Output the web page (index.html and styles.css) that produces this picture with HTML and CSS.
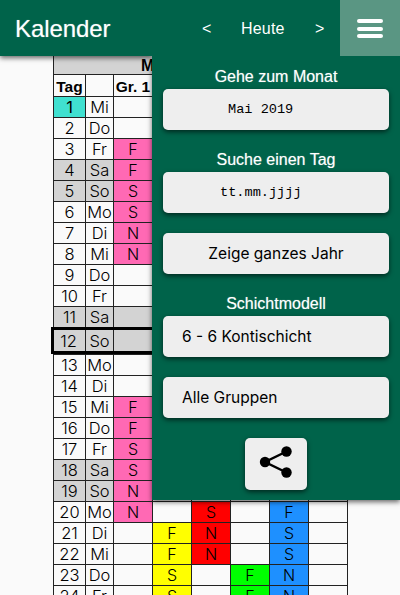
FILE: index.html
```html
<!DOCTYPE html>
<html lang="de">
<head>
<meta charset="utf-8">
<title>Kalender</title>
<link rel="stylesheet" href="styles.css">
</head>
<body>
<header class="bar">
  <h1 class="title">Kalender</h1>
  <nav class="nav"><span class="prev">&lt;</span><span class="today">Heute</span><span class="next">&gt;</span></nav>
  <button class="burger" aria-label="Menü"><i></i><i></i><i></i></button>
</header>
<main class="calendar" id="calendar">
  <div class="month">Mai 2019</div>
  <div class="row head"><b>Tag</b><b></b><b>Gr. 1</b><b></b><b></b><b></b><b></b><b></b></div>
</main>
<aside class="menu">
  <div class="label">Gehe zum Monat</div>
  <button class="field mono month-input">Mai 2019</button>
  <div class="label">Suche einen Tag</div>
  <button class="field mono day-input">tt.mm.jjjj</button>
  <button class="field year">Zeige ganzes Jahr</button>
  <div class="label model">Schichtmodell</div>
  <button class="field select">6 - 6 Kontischicht</button>
  <button class="field select groups">Alle Gruppen</button>
  <button class="share" aria-label="Teilen">
    <svg width="34" height="34" viewBox="0 0 34 34"><path d="M27.500 6.500 6 17l21.500 10.500" fill="none" stroke="#000" stroke-width="2.500"/><circle cx="6" cy="17" r="5.200"/><circle cx="27.500" cy="6.500" r="5.200"/><circle cx="27.500" cy="27.500" r="5.200"/></svg>
  </button>
</aside>
<script src="calendar.js"></script>
</body>
</html>
```
FILE: styles.css
```css
* { box-sizing: border-box; }
body { margin: 0; height: 595px; overflow: hidden; position: relative; background: #fafafa; font-family: "Liberation Sans", sans-serif; color: #000; }
button { border: 0; padding: 0; margin: 0; font: inherit; color: inherit; }
.bar { position: relative; z-index: 3; height: 56px; display: flex; background: #00634a; color: #fff; }
.bar::after { content: ""; position: absolute; left: 0; top: 0; width: 152px; height: 56px; box-shadow: 0 2px 5px rgba(0,0,0,.6); clip-path: inset(56px 0 -10px 0); }
.title { margin: 0; padding-left: 15px; width: 202px; font-size: 24px; font-weight: 400; line-height: 58px; letter-spacing: -.1px; text-shadow: 0 0 1px rgba(255,255,255,.5); }
.nav { width: 138px; display: flex; line-height: 58px; font-size: 16px; }
.prev { width: 39px; }
.today { width: 74px; letter-spacing: .2px; }
.burger { width: 60px; height: 56px; background: #5a9683; display: flex; flex-direction: column; align-items: center; gap: 3.500px; padding-top: 19px; }
.burger i { width: 26px; height: 4px; border-radius: 2px; background: #fff; flex: none; }
.calendar { width: 295px; margin-left: 53px; border-right: 1px solid #222; }
.month { height: 18px; padding-left: 87px; border-left: 1px solid #222; background: #d3d3d3; font-weight: 700; font-size: 16px; line-height: 20px; }
.row { display: grid; grid-template-columns: 32px 28px repeat(6, 39px); height: 21px; font-family: Inter, sans-serif; font-weight: 300; font-size: 16.500px; line-height: 21px; text-align: center; }
.row > * { border-left: 1px solid #222; border-top: 1px solid #222; white-space: nowrap; overflow: hidden; }
.row.head { height: 22px; font-family: "Liberation Sans", sans-serif; font-size: 15.500px; line-height: 23px; }
.head b { font-weight: 700; }
.shift { font-weight: 350; font-size: 16px; }
.weekend { background: #d3d3d3; }
.current { background: #40e0d0; font-weight: 400; }
.g1 { background: #ff69b4; }
.g2 { background: #ff0; }
.g3 { background: #f00; }
.g4 { background: #0f0; }
.g5 { background: #1e90ff; }
.row.marked { position: relative; height: 27px; line-height: 27px; margin-left: -2px; margin-right: -3px; grid-template-columns: 34px 28px repeat(5, 39px) 1fr; outline: 3px solid #000; outline-offset: -3px; background: #d3d3d3; }
.menu { position: absolute; z-index: 2; left: 152px; top: 56px; width: 248px; height: 444px; padding: 11px 11px 0; background: #00634a; box-shadow: 0 2px 5px rgba(0,0,0,.6); display: flex; flex-direction: column; }
.label { height: 22px; line-height: 20px; font-size: 16px; text-align: center; color: #fff; text-shadow: 0 0 1px rgba(255,255,255,.5); }
.field { flex: none; height: 41px; width: 226px; border-radius: 5px; background: #eee; box-shadow: 0 2px 5px rgba(0,0,0,.6); font-family: Inter, sans-serif; font-size: 15.500px; line-height: 41px; text-align: center; margin-bottom: 20px; }
.mono { font-family: "Liberation Mono", monospace; font-size: 13.600px; text-align: left; }
.month-input { padding-left: 65px; }
.day-input { padding-left: 57px; }
.select { text-align: left; padding-left: 19px; }
.share { align-self: center; width: 62px; height: 52px; border-radius: 5px; background: #eee; box-shadow: 0 2px 5px rgba(0,0,0,.6); display: flex; justify-content: center; padding-top: 7px; }
```
FILE: calendar.js
```javascript
const names = ["Mi", "Do", "Fr", "Sa", "So", "Mo", "Di"];
const shifts = {
  3: "F", 4: "F", 5: "S", 6: "S", 7: "N", 8: "N",
  15: "F", 16: "F", 17: "S", 18: "S", 19: "N",
  20: "N.S.F", 21: " FN.S", 22: " FN.S", 23: " S.FN", 24: " S.FN"
};
const calendar = document.getElementById("calendar");
for (let day = 1; day <= 24; day++) {
  const row = document.createElement("div");
  row.className = "row" + (day === 12 ? " marked" : "");
  const name = names[(day - 1) % 7];
  const weekend = name[0] === "S" ? "weekend" : "";
  const add = (text, cls) => {
    const cell = document.createElement("span");
    cell.textContent = text;
    cell.className = cls;
    row.append(cell);
  };
  add(day, day === 1 ? "current" : weekend);
  add(name, weekend);
  for (let group = 1; group <= 6; group++) {
    const shift = (shifts[day] || "")[group - 1];
    const active = shift && /[FSN]/.test(shift);
    add(active ? shift : "", active ? "shift g" + group : day === 11 || day === 12 ? "weekend" : "");
  }
  calendar.append(row);
}
```
